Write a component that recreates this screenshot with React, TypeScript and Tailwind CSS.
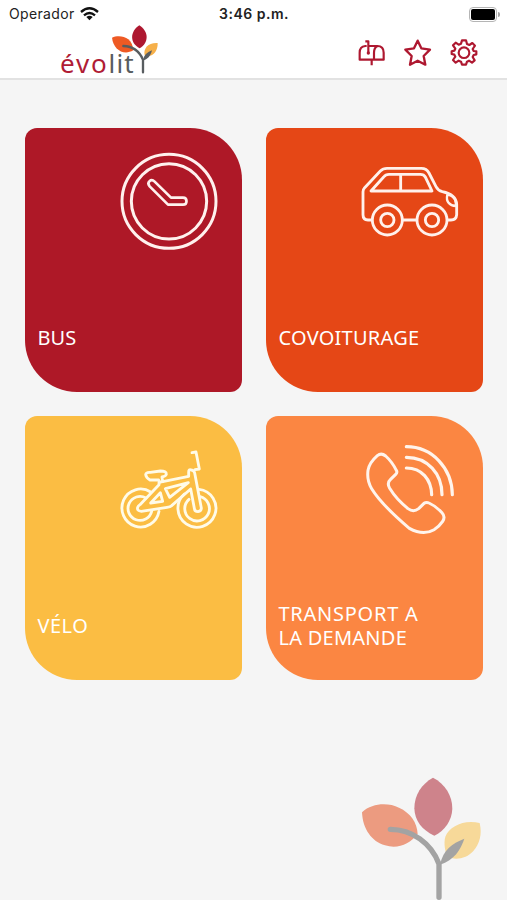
import type { ReactNode } from "react";

function StatusBar() {
  return (
    <div className="flex h-7 items-center justify-between pl-[9px] pr-[7px] font-['Inter',sans-serif] text-[14px] leading-7 text-[#222]">
      <div className="flex w-[179px] items-center gap-[5px]">
        <span className="tracking-[0.35px]">Operador</span>
        <svg width="19" height="15" viewBox="0 0 57 45" fill="none" stroke="#111" strokeWidth="7">
          <path d="M3 15 Q28.500 -7 54 15" />
          <path d="M12 25 Q28.500 11 45 25" />
          <path d="M19 30 Q28.500 23 38 30 L28.500 40 Z" fill="#111" stroke="none" />
        </svg>
      </div>
      <span className="font-semibold tracking-[0.5px]">3:46 p.m.</span>
      <div className="flex w-[180px] items-center justify-end">
        <div className="flex h-[15px] w-[28px] rounded-[4px] border-[1.5px] border-[#b5b5b5] p-[1px]">
          <div className="w-full rounded-[2px] bg-black" />
        </div>
        <div className="ml-px h-[5px] w-[2px] rounded-r-full bg-[#a5a5a5]" />
      </div>
    </div>
  );
}

function Logo() {
  return (
    <div className="relative h-[50px] w-[100px] font-['Noto_Sans',sans-serif]">
      <div className="whitespace-nowrap pt-[18px] text-[26px] leading-[34px] text-[#585d60]">
        <span className="tracking-[1.8px] text-[#b01c35]">évo</span>
        <span className="tracking-[1.2px]">lit</span>
      </div>
      <svg className="absolute left-[50px] top-[-4px]" width="50" height="54" viewBox="332 72 150 162" fill="none">
        <path d="M338 113 C360 104 399 108 402 151 C372 168 342 148 338 113 Z" fill="#ee5a24" />
        <path d="M420 76 C449 94 449 129 421 145 C391 130 391 95 420 76 Z" fill="#ae1830" />
        <path d="M475 129 C448 127 431 144 436 166 C458 175 476 155 475 129 Z" fill="#f6b04a" />
        <path d="M372 138 C400 139 419 151 431 179 V217" stroke="#585d60" strokeWidth="7" strokeLinecap="round" />
        <path d="M431 182 C434 163 445 157 458 151 C454 168 444 179 431 182 Z" fill="#585d60" />
      </svg>
    </div>
  );
}

function Toolbar() {
  return (
    <svg width="125" height="36" viewBox="48 108 375 108" fill="none" stroke="#ae1830" strokeWidth="6.5" strokeLinejoin="round">
      <path d="M80 138 H76 C65 139 59 147 59 158 V179 H131 V158 C131 146 125 138 112 138 H87" />
      <path d="M102 179 V158 C102 147 106 141 113 138 M95 179 V196 M85 157 V124 H76" />
      <circle cx="85" cy="159" r="5" fill="#ae1830" stroke="none" />
      <path d="M233 122 L244 145 L270 149 L251 168 L256 194 L233 182 L210 194 L215 168 L196 149 L222 145 Z" strokeWidth="7" />
      <circle cx="372" cy="158" r="16" />
      <path d="M366 121 H378 L381 132 L388 135 L397 129 L405 137 L398 147 L401 153 L409 154 V163 L401 165 L398 171 L404 181 L396 188 L387 182 L381 185 L378 194 H366 L363 185 L356 182 L347 188 L339 180 L346 170 L343 164 L335 162 V154 L343 152 L346 146 L339 136 L347 128 L356 134 L363 131 Z" />
    </svg>
  );
}

function ClockIcon() {
  return (
    <svg width="132" height="132" viewBox="0 24 396 396" fill="none" stroke="#fff1ee" strokeWidth="9">
      <circle cx="177" cy="244" r="141" />
      <circle cx="177" cy="244" r="113" />
      <path d="M134 185 L183 233 H219 C233 233 233 254 219 254 H174 L119 199 C109 187 123 174 134 185 Z" strokeLinejoin="round" strokeWidth="8" />
    </svg>
  );
}

function CarIcon() {
  return (
    <svg width="133" height="132" viewBox="0 24 399 396" fill="none" stroke="#fff1ec" strokeWidth="8.5" strokeLinejoin="round">
      <path d="M66 300 H54 Q39 299 39 284 V215 Q39 209 44 203 L91 153 Q99 145 111 145 H214 Q230 145 237 159 L258 200 Q264 212 277 215 Q318 223 320 253 V284 Q319 300 303 300 H292 M158 300 H200" />
      <path d="M63 213 L101 171 Q107 163 117 163 H211 Q222 163 226 171 L246 213 Z M152 163 V213" />
      <circle cx="112" cy="300" r="45" />
      <circle cx="112" cy="300" r="20" />
      <circle cx="246" cy="300" r="45" />
      <circle cx="246" cy="300" r="20" />
      <path d="M292 224 C287 244 298 257 318 258 C319 240 310 226 292 224 Z" strokeWidth="7" />
    </svg>
  );
}

function BikeIcon() {
  return (
    <svg width="132" height="134" viewBox="0 18 396 402" fill="none" stroke="#fffbe8" strokeWidth="8.5" strokeLinejoin="round" strokeLinecap="round">
      <path d="M122 246 A56 57 0 1 0 147 304" />
      <path d="M108 264 A36 36 0 1 0 125 304" />
      <path d="M223 252 A57 57 0 1 0 267 238" />
      <path d="M237 268 A37 37 0 1 0 270 260" />
      <path d="M147 217 L236 199 V186 Q236 177 244 180 Q252 181 254 189 L274 294 Q274 304 264 305 Q254 305 253 295 L242 237 L185 287 Q181 291 171 292 L94 304 Q80 303 83 292 Q84 288 90 284 L147 224 Z" />
      <path d="M122 279 L151 248 L158 274 Z M166 236 L235 218 L179 262 Z" />
      <path d="M149 217 L146 210 H120 Q108 203 107 194 Q108 186 121 187 L151 183 Q170 183 169 193 Q167 199 156 201 L158 215" />
      <path d="M246 128 L258 126 L268 177 L255 179" />
    </svg>
  );
}

function PhoneIcon() {
  return (
    <svg width="133" height="134" viewBox="0 18 399 402" fill="none" stroke="#fff4ec" strokeWidth="9" strokeLinejoin="round" strokeLinecap="round">
      <path d="M82 137 Q94 127 107 138 Q126 155 139 181 Q143 187 137 193 L121 209 Q110 219 119 235 Q139 268 174 296 Q190 308 206 296 L222 280 Q229 275 237 279 Q257 288 276 308 Q287 320 278 334 Q268 349 252 359 Q220 378 178 355 C131 315 89 275 65 236 Q50 211 54 181 Q58 158 82 137 Z" />
      <path d="M169 174 C215 174 244 208 245 254 M169 142 C233 142 276 191 276 254 M169 110 C247 110 306 175 307 254" strokeWidth="9.500" />
    </svg>
  );
}

function Card({ color, icon, children }: { color: string; icon: ReactNode; children: ReactNode }) {
  return (
    <button className={`flex h-[264px] w-[217px] flex-col justify-between rounded-tl-[12px] rounded-tr-[52px] rounded-br-[12px] rounded-bl-[52px] pb-[30px] text-left text-white ${color}`}>
      <div className="self-end">{icon}</div>
      <div className="flex h-12 flex-col justify-center pl-[12.5px] font-['Noto_Sans',sans-serif] text-[20px] leading-6">
        {children}
      </div>
    </button>
  );
}

function Sprig() {
  return (
    <svg width="157" height="130" viewBox="0 0 471 390" fill="none">
      <path d="M36 127 C67 98 115 98 147 113 C181 128 202 158 203 192 C179 222 144 238 105 226 C65 215 38 177 36 127 Z" fill="#ec9b80" />
      <path d="M249 23 C286 42 307 77 307 116 C306 151 283 183 253 197 C217 181 194 153 193 115 C193 76 214 42 249 23 Z" fill="#ce838b" />
      <path d="M389 159 C341 148 299 169 286 200 C281 218 284 244 294 262 C321 271 351 265 370 243 C389 222 397 193 389 159 Z" fill="#f7d999" />
      <path d="M121 178 C186 178 244 220 267 282 V382" stroke="#a3a3a3" strokeWidth="16" strokeLinecap="round" strokeLinejoin="round" />
      <path d="M270 284 C280 239 305 221 343 206 C332 239 313 270 270 284 Z" fill="#a3a3a3" />
    </svg>
  );
}

export default function App() {
  return (
    <div className="flex h-[900px] w-[507px] flex-col overflow-hidden bg-[#f5f5f5]">
      <header className="h-20 shrink-0 border-b-2 border-[#e2e2e2] bg-white">
        <StatusBar />
        <div className="flex justify-between pl-[60px] pr-[26px]">
          <Logo />
          <div className="pt-[8px]">
            <Toolbar />
          </div>
        </div>
      </header>
      <main className="grid grid-cols-[217px_217px] gap-6 pl-[25px] pt-12">
        <Card color="bg-[#ae1827]" icon={<ClockIcon />}>
          <span className="tracking-[0.1px]">BUS</span>
        </Card>
        <Card color="bg-[#e54716]" icon={<CarIcon />}>
          <span className="tracking-[0.25px]">COVOITURAGE</span>
        </Card>
        <Card color="bg-[#fbbd43]" icon={<BikeIcon />}>
          <span className="tracking-[0.5px]">VÉLO</span>
        </Card>
        <Card color="bg-[#fb8642]" icon={<PhoneIcon />}>
          <p className="tracking-[0.25px] first-line:tracking-[0.75px]">
            TRANSPORT A<br />LA DEMANDE
          </p>
        </Card>
      </main>
      <div className="mt-auto flex justify-end">
        <Sprig />
      </div>
    </div>
  );
}
